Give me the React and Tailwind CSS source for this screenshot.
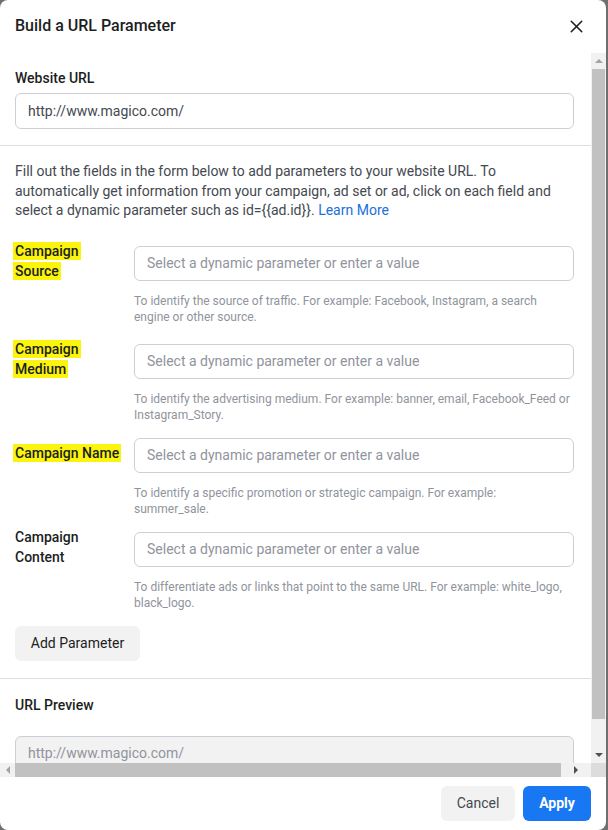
import { X } from "lucide-react";

const fields = [
  {
    lines: ["Campaign", "Source"],
    marked: true,
    help: "To identify the source of traffic. For example: Facebook, Instagram, a search engine or other source.",
  },
  {
    lines: ["Campaign", "Medium"],
    marked: true,
    help: "To identify the advertising medium. For example: banner, email, Facebook_Feed or Instagram_Story.",
  },
  {
    lines: ["Campaign Name"],
    marked: true,
    help: "To identify a specific promotion or strategic campaign. For example: summer_sale.",
  },
  {
    lines: ["Campaign", "Content"],
    marked: false,
    help: "To differentiate ads or links that point to the same URL. For example: white_logo, black_logo.",
  },
];

function FieldRow({ field }) {
  const single = field.lines.length === 1;
  return (
    <div className="flex items-start">
      <div
        className={
          "w-[119px] shrink-0 text-[14px] font-medium leading-5 text-[#1c1e21] " +
          (single ? "mt-[5px]" : "-mt-[5px]")
        }
      >
        {field.lines.map((line) => (
          <div key={line}>
            <span
              className={
                field.marked ? "bg-[#fbf40c] -ml-[2px] px-[2px] py-[1px]" : ""
              }
            >
              {line}
            </span>
          </div>
        ))}
      </div>
      <div className="flex-1">
        <div className="h-[35px] rounded-[6px] border border-[#ccd0d5] bg-white px-3 flex items-center text-[14px] text-[#90949c]">
          Select a dynamic parameter or enter a value
        </div>
        <p className="mt-[12px] pr-[2px] text-[12px] leading-4 text-[#90949c]">
          {field.help}
        </p>
      </div>
    </div>
  );
}

function VerticalBar() {
  return (
    <div className="w-[15px] shrink-0 bg-[#f1f1f1] flex flex-col items-center mt-px">
      <div className="h-[16px] flex items-center justify-center">
        <div className="w-0 h-0 border-l-[4px] border-r-[4px] border-b-[4px] border-l-transparent border-r-transparent border-b-[#a3a3a3]" />
      </div>
      <div className="w-[13px] h-[650px] bg-[#c1c1c1]" />
      <div className="flex-1" />
      <div className="h-[16px] flex items-center justify-center">
        <div className="w-0 h-0 border-l-[4px] border-r-[4px] border-t-[4px] border-l-transparent border-r-transparent border-t-[#505050]" />
      </div>
    </div>
  );
}

function HorizontalBar() {
  return (
    <div className="flex h-[14px]">
      <div className="w-[591px] bg-[#f1f1f1] flex items-center">
        <div className="w-[15px] flex justify-center">
          <div className="w-0 h-0 border-t-[4px] border-b-[4px] border-r-[4px] border-t-transparent border-b-transparent border-r-[#a3a3a3]" />
        </div>
        <div className="w-[546px] h-[14px] bg-[#c1c1c1]" />
        <div className="flex-1 flex justify-center">
          <div className="w-0 h-0 border-t-[4px] border-b-[4px] border-l-[4px] border-t-transparent border-b-transparent border-l-[#505050]" />
        </div>
      </div>
      <div className="w-[15px] bg-[#dcdcdc]" />
    </div>
  );
}

export default function App() {
  return (
    <div
      className="w-[608px] h-[830px] bg-[#6f6f6f] overflow-hidden"
      style={{ fontFamily: "Roboto, 'Liberation Sans', sans-serif" }}
    >
      <div className="w-[606px] h-[830px] bg-white rounded-[8px] flex flex-col overflow-hidden">
        {/* header */}
        <div className="h-[52px] shrink-0 flex items-center justify-between pl-[15px] pr-[19px]">
          <h1 className="text-[16px] font-medium text-[#1c1e21]">
            Build a URL Parameter
          </h1>
          <X size={21} strokeWidth={1.75} className="text-[#1c1e21]" />
        </div>

        {/* scrolling body */}
        <div className="h-[711px] flex">
          <div className="w-[591px] overflow-hidden">
            <div className="pl-[15px] pr-[17px] pt-4 pb-4 border-b border-[#dddfe2]">
              <div className="text-[14px] font-medium leading-5 text-[#1c1e21]">
                Website URL
              </div>
              <div className="mt-[5px] h-[36px] rounded-[6px] border border-[#ccd0d5] px-3 flex items-center text-[14px] text-[#444950]">
                http://www.magico.com/
              </div>
            </div>

            <div className="pl-[15px] pr-[17px] pt-4 pb-[17px] border-b border-[#dddfe2]">
              <p className="text-[14px] leading-[19.5px] text-[#444950]">
                Fill out the fields in the form below to add parameters to your
                website URL. To automatically get information from your campaign,
                ad set or ad, click on each field and select a dynamic parameter
                such as id={"{{ad.id}}"}. <a className="text-[#216fdb]">Learn More</a>
              </p>

              <div className="mt-[25px] flex flex-col gap-[15px]">
                {fields.map((f, i) => (
                  <div key={f.lines.join(" ")} className={i === 0 ? "mb-[4px]" : ""}>
                    <FieldRow field={f} />
                  </div>
                ))}
              </div>

              <button className="mt-[15px] h-[35px] w-[125px] rounded-[6px] bg-[#f2f2f2] text-[14px] text-[#1c1e21]">
                Add Parameter
              </button>
            </div>

            <div className="pl-[15px] pr-[17px] pt-4">
              <div className="text-[14px] font-medium leading-5 text-[#1c1e21]">
                URL Preview
              </div>
              <div className="mt-[21px] h-[36px] rounded-[6px] border border-[#ccd0d5] bg-[#f2f2f2] px-3 flex items-center text-[14px] text-[#90949c]">
                http://www.magico.com/
              </div>
            </div>
          </div>
          <VerticalBar />
        </div>

        <HorizontalBar />

        {/* footer */}
        <div className="flex-1 flex items-start justify-end gap-2 pt-[9px] pr-[15px]">
          <button className="h-[35px] w-[74px] rounded-[6px] bg-[#f2f2f2] text-[14px] text-[#444950]">
            Cancel
          </button>
          <button className="h-[35px] w-[68px] rounded-[6px] bg-[#1877f2] text-[14px] font-bold text-white">
            Apply
          </button>
        </div>
      </div>
    </div>
  );
}
